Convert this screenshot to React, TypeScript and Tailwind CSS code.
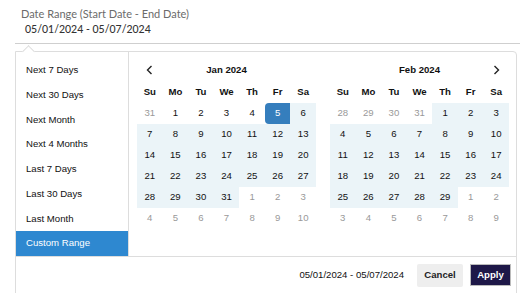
import { useState } from "react";

type Cell = { d: number; off?: boolean; hl?: boolean; sel?: boolean };

const row = (days: number[], opt: Partial<Cell> = {}) => days.map((d) => ({ d, ...opt }));
const range = (a: number, b: number) => Array.from({ length: b - a + 1 }, (_, i) => a + i);

const jan: Cell[][] = [
  [{ d: 31, off: true }, ...row([1, 2, 3, 4]), { d: 5, sel: true }, { d: 6, hl: true }],
  row(range(7, 13), { hl: true }),
  row(range(14, 20), { hl: true }),
  row(range(21, 27), { hl: true }),
  [...row(range(28, 31), { hl: true }), ...row([1, 2, 3], { off: true })],
  row(range(4, 10), { off: true }),
];

const feb: Cell[][] = [
  [...row(range(28, 31), { off: true }), ...row([1, 2, 3], { hl: true })],
  row(range(4, 10), { hl: true }),
  row(range(11, 17), { hl: true }),
  row(range(18, 24), { hl: true }),
  [...row(range(25, 29), { hl: true }), ...row([1, 2], { off: true })],
  row(range(3, 9), { off: true }),
];

const ranges = [
  "Next 7 Days",
  "Next 30 Days",
  "Next Month",
  "Next 4 Months",
  "Last 7 Days",
  "Last 30 Days",
  "Last Month",
  "Custom Range",
];

const dow = ["Su", "Mo", "Tu", "We", "Th", "Fr", "Sa"];

const Chevron = ({ dir }: { dir: "left" | "right" }) => (
  <svg width="8" height="10" viewBox="0 0 8 10" fill="none">
    <polyline
      points={dir === "left" ? "5.5,1 1.5,5 5.5,9" : "2.5,1 6.5,5 2.5,9"}
      stroke="#222"
      strokeWidth="1.4"
    />
  </svg>
);

const Month = ({ title, cells, prev, next }: { title: string; cells: Cell[][]; prev?: boolean; next?: boolean }) => (
  <div className="w-[179px]">
    <div className="grid grid-cols-7 h-[22px] items-center">
      <div className="flex justify-center">{prev && <Chevron dir="left" />}</div>
      <div className="col-span-5 text-center font-bold">{title}</div>
      <div className="flex justify-center">{next && <Chevron dir="right" />}</div>
    </div>
    <div className="grid grid-cols-7 h-[22px] items-center font-bold text-center">
      {dow.map((d) => (
        <div key={d}>{d}</div>
      ))}
    </div>
    {cells.map((r, i) => (
      <div key={i} className="grid grid-cols-7">
        {r.map((c, j) => (
          <div
            key={j}
            className={`h-[21px] flex items-center justify-center ${
              c.sel
                ? "bg-[#357ebd] text-white rounded-l-[4px]"
                : c.hl
                ? "bg-[#ebf4f8] text-[#111]"
                : c.off
                ? "text-[#999]"
                : "text-[#111]"
            }`}
          >
            {c.d}
          </div>
        ))}
      </div>
    ))}
  </div>
);

export default function App() {
  const [active, setActive] = useState("Custom Range");

  return (
    <div className="w-[520px] h-[293px] overflow-hidden bg-white">
      <div className="pl-[21px] pt-[7px]">
        <div className="font-['Lato',sans-serif] text-[11px] leading-[14px] text-[#6b6b6b]">
          Date Range (Start Date - End Date)
        </div>
        <div className="pl-[4px] font-['Lato',sans-serif] text-[10.5px] leading-[17px] font-medium text-[#333]">
          05/01/2024 - 05/07/2024
        </div>
      </div>
      <div className="ml-[15px] mt-[5px] h-px bg-[#cfcfcf]" />

      <div className="relative ml-[15px] mt-[7px] w-[502px] border border-[#ddd] rounded-tr-[4px] bg-white font-['Liberation_Sans',Arial,sans-serif] text-[9.6px] text-[#111]">
        <div className="absolute top-[-5px] left-[8px] w-[9px] h-[9px] rotate-45 border-l border-t border-[#ddd] bg-white" />

        <div className="flex">
          <ul className="w-[113px] border-r border-[#ddd] pt-[6px]">
            {ranges.map((r) => (
              <li
                key={r}
                onClick={() => setActive(r)}
                className={`h-[24.75px] flex items-center pl-[10px] cursor-pointer ${
                  active === r ? "bg-[#2e88d0] text-white" : "text-[#111]"
                }`}
              >
                {r}
              </li>
            ))}
          </ul>
          <div className="flex gap-[14px] ml-[8px] pt-[7px]">
            <Month title="Jan 2024" cells={jan} prev />
            <Month title="Feb 2024" cells={feb} next />
          </div>
        </div>

        <div className="flex items-center justify-end border-t border-[#ddd] h-[37px] pr-[5px]">
          <span className="text-[#111] mr-[13px]">05/01/2024 - 05/07/2024</span>
          <button className="w-[46px] h-[23px] bg-[#eeeeee] rounded-[2px] font-bold text-[#222] mr-[7px]">
            Cancel
          </button>
          <button className="w-[41px] h-[22px] bg-[#1e1848] border border-[#bbb] font-bold text-white">
            Apply
          </button>
        </div>
      </div>
    </div>
  );
}
